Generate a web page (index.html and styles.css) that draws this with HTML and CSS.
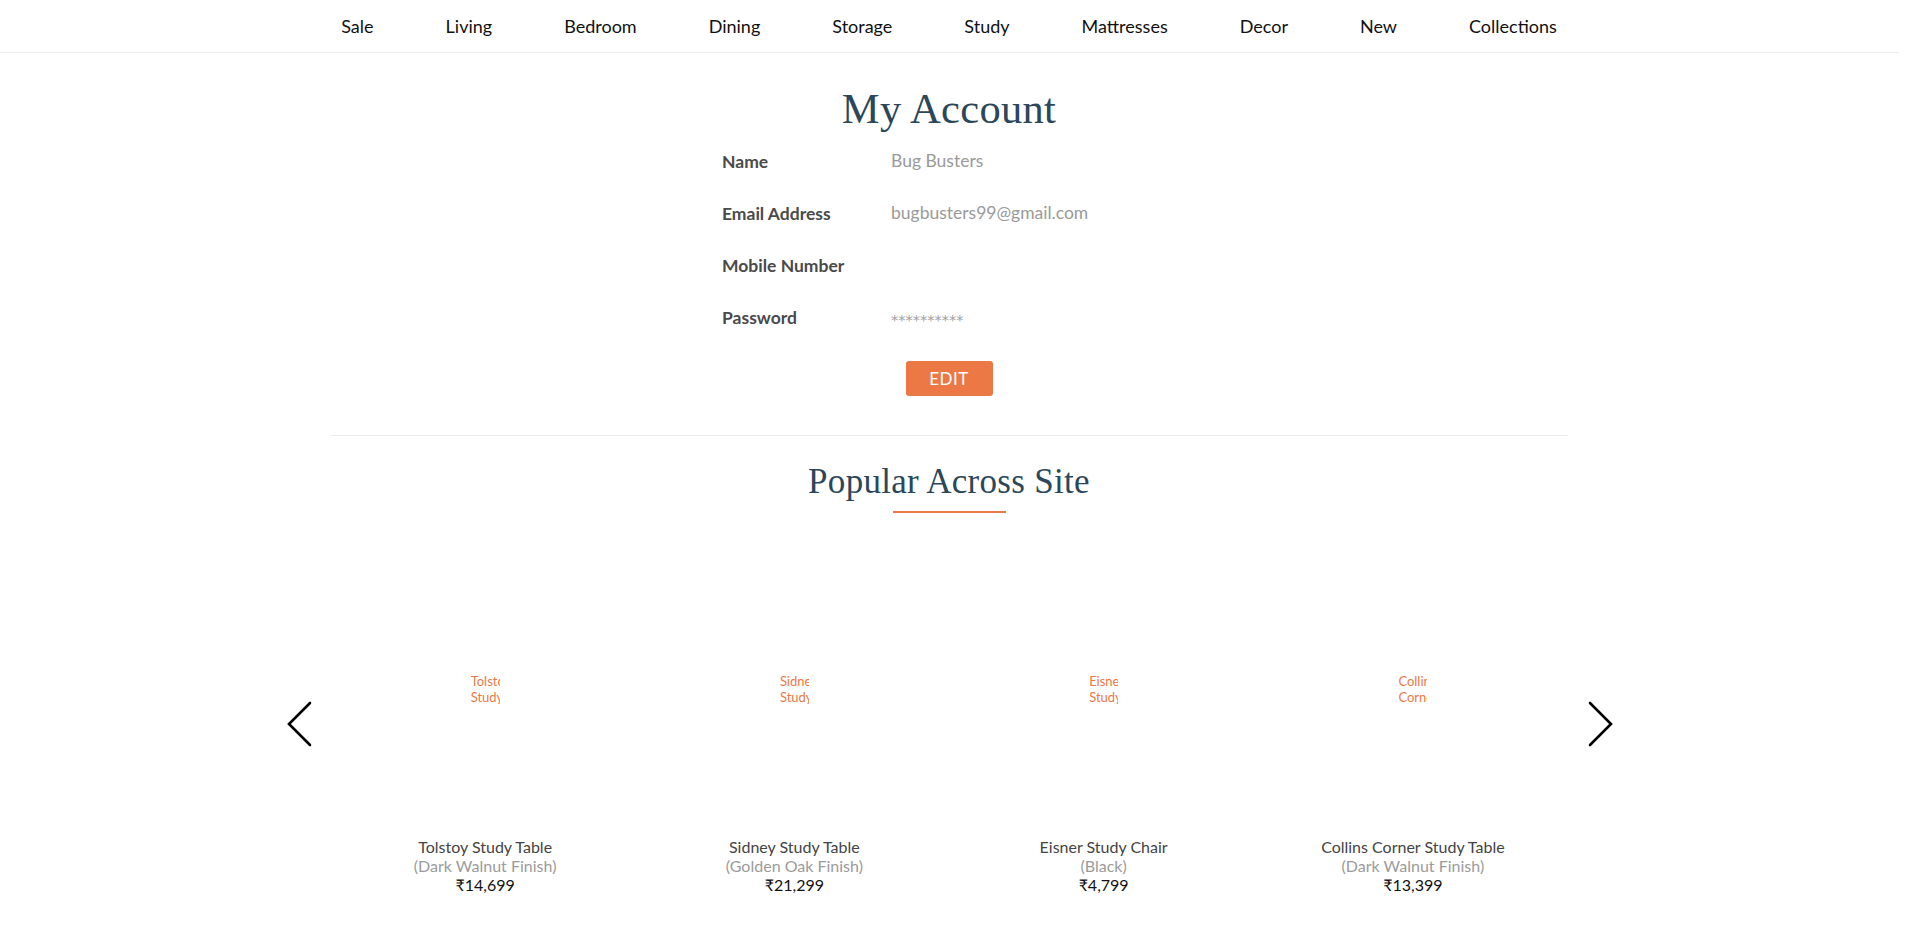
FILE: index.html
```html
<!DOCTYPE html>
<html lang="en">
<head>
<meta charset="utf-8">
<title>My Account</title>
<link rel="stylesheet" href="styles.css">
</head>
<body>
<div class="page">
  <header class="topnav">
    <nav class="nav-list">
      <a class="nav-item" href="#">Sale</a>
      <a class="nav-item" href="#">Living</a>
      <a class="nav-item" href="#">Bedroom</a>
      <a class="nav-item" href="#">Dining</a>
      <a class="nav-item" href="#">Storage</a>
      <a class="nav-item" href="#">Study</a>
      <a class="nav-item" href="#">Mattresses</a>
      <a class="nav-item" href="#">Decor</a>
      <a class="nav-item" href="#">New</a>
      <a class="nav-item" href="#">Collections</a>
    </nav>
  </header>

  <main class="container">
    <section class="account">
      <h1 class="account-title">My Account</h1>
      <div class="account-form">
        <div class="field-label">Name</div>
        <div class="field-value">Bug Busters</div>
        <div class="field-label">Email Address</div>
        <div class="field-value">bugbusters99@gmail.com</div>
        <div class="field-label">Mobile Number</div>
        <div class="field-value"></div>
        <div class="field-label">Password</div>
        <div class="field-value field-pass">**********</div>
      </div>
      <div class="actions">
        <button class="btn-edit" type="button">EDIT</button>
      </div>
    </section>

    <section class="popular">
      <h2 class="popular-title">Popular Across Site</h2>
      <div class="popular-rule"></div>
      <div class="carousel">
        <button class="arrow arrow-left" type="button" aria-label="Previous">
          <svg width="28" height="48" viewBox="0 0 28 48"><path d="M23 2 L2 23 L23 44" fill="none" stroke="#000" stroke-width="2.6" stroke-linecap="round" stroke-linejoin="miter"/></svg>
        </button>
        <div class="cards">
          <div class="card">
            <div class="card-img">Tolstoy Study Table</div>
            <div class="card-name">Tolstoy Study Table</div>
            <div class="card-finish">(Dark Walnut Finish)</div>
            <div class="card-price">₹14,699</div>
          </div>
          <div class="card">
            <div class="card-img">Sidney Study Table</div>
            <div class="card-name">Sidney Study Table</div>
            <div class="card-finish">(Golden Oak Finish)</div>
            <div class="card-price">₹21,299</div>
          </div>
          <div class="card">
            <div class="card-img">Eisner Study Chair</div>
            <div class="card-name">Eisner Study Chair</div>
            <div class="card-finish">(Black)</div>
            <div class="card-price">₹4,799</div>
          </div>
          <div class="card">
            <div class="card-img">Collins Corner Study Table</div>
            <div class="card-name">Collins Corner Study Table</div>
            <div class="card-finish">(Dark Walnut Finish)</div>
            <div class="card-price">₹13,399</div>
          </div>
        </div>
        <button class="arrow arrow-right" type="button" aria-label="Next">
          <svg width="28" height="48" viewBox="0 0 28 48"><path d="M5 2 L26 23 L5 44" fill="none" stroke="#000" stroke-width="2.6" stroke-linecap="round" stroke-linejoin="miter"/></svg>
        </button>
      </div>
    </section>
  </main>
</div>
</body>
</html>
```

FILE: styles.css
```css
* { box-sizing: border-box; }

html, body {
  margin: 0;
  padding: 0;
  background: #fff;
}

body {
  font-family: Lato, "Open Sans", "DejaVu Sans", sans-serif;
  color: #222;
}

.page {
  margin-right: 22px;
}

/* top navigation */
.topnav {
  height: 53px;
  border-bottom: 1px solid #ececec;
}

.nav-list {
  display: flex;
  justify-content: center;
  align-items: center;
  gap: 72px;
  height: 52px;
}

.nav-item {
  font-size: 18px;
  color: #111;
  text-decoration: none;
  line-height: 22px;
}

/* account */
.container {
  width: 1237px;
  margin: 0 auto;
}

.account {
  display: flex;
  flex-direction: column;
  align-items: center;
}

.account-title {
  margin: 32px 0 0;
  font-family: "Liberation Serif", "Times New Roman", serif;
  font-weight: 400;
  font-size: 42.5px;
  line-height: 47px;
  color: #2b4759;
  letter-spacing: 0.3px;
}

.account-form {
  width: 454px;
  margin-top: 3px;
  display: grid;
  grid-template-columns: 169px 1fr;
  grid-auto-rows: 52px;
  align-items: center;
}

.field-label {
  font-weight: 700;
  font-size: 17.5px;
  color: #4a4a4a;
}

.field-value {
  font-size: 17.5px;
  color: #9a9a9a;
  margin-top: -2px;
}

.field-pass {
  font-family: "DejaVu Sans", sans-serif;
  font-size: 14.5px;
  line-height: 16px;
  padding-top: 7px;
  color: #a0a0a0;
}

.actions {
  margin-top: 18px;
}

.btn-edit {
  width: 87px;
  height: 35px;
  border: none;
  border-radius: 3px;
  background: #ec7845;
  color: #fff;
  font-family: Lato, "Open Sans", sans-serif;
  font-size: 17px;
  letter-spacing: 0.5px;
  cursor: pointer;
}

/* popular */
.popular {
  margin-top: 39px;
  border-top: 1px solid #ebebeb;
  display: flex;
  flex-direction: column;
  align-items: center;
}

.popular-title {
  margin: 26px 0 0;
  font-family: "Liberation Serif", "Times New Roman", serif;
  font-weight: 400;
  font-size: 35px;
  line-height: 39px;
  color: #2b4759;
  letter-spacing: 0.3px;
}

.popular-rule {
  width: 113px;
  height: 2px;
  margin-top: 10px;
  background: #ec7845;
}

.carousel {
  position: relative;
  width: 100%;
  margin-top: 160px;
}

.cards {
  display: grid;
  grid-template-columns: repeat(4, 1fr);
}

.card {
  display: flex;
  flex-direction: column;
  align-items: center;
  text-align: center;
}

.card-img {
  width: 29px;
  height: 32px;
  margin-bottom: 132px;
  overflow: hidden;
  font-size: 13px;
  line-height: 16px;
  color: #ec7845;
  text-align: left;
}

.card-name {
  font-size: 16px;
  line-height: 19px;
  color: #444;
}

.card-finish {
  font-size: 16px;
  line-height: 19px;
  color: #9b9b9b;
}

.card-price {
  font-size: 16px;
  line-height: 19px;
  color: #111;
}

.arrow {
  position: absolute;
  top: 28px;
  width: 28px;
  height: 48px;
  padding: 0;
  border: none;
  background: none;
  cursor: pointer;
}

.arrow-left { left: -44px; }
.arrow-right { right: -45px; }
```
